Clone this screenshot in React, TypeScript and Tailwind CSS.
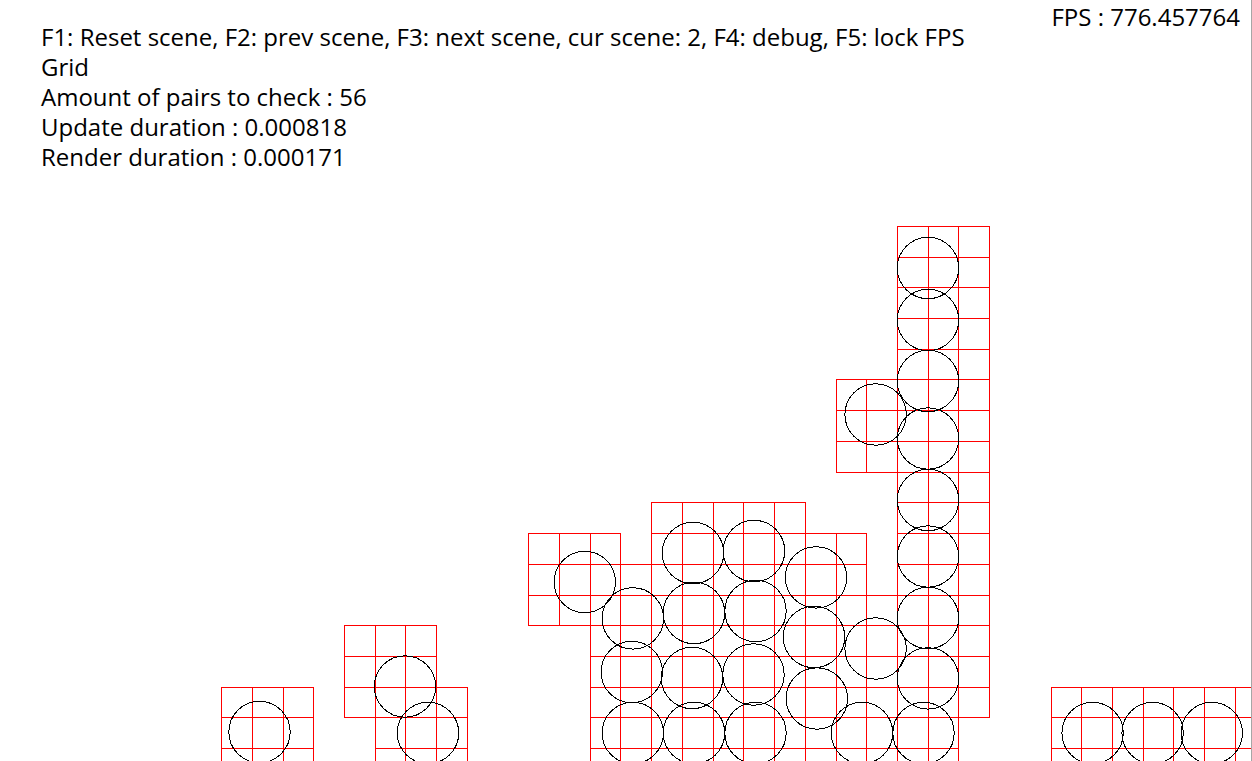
const COLS = [
  221, 252, 283, 313, 344, 375, 405, 436, 467, 497, 528, 559, 590, 620, 651, 682, 713, 743,
  774, 805, 836, 866, 897, 928, 958, 989, 1020, 1051, 1081, 1112, 1143, 1173, 1204, 1235, 1266,
];

const ROWS = [
  226, 257, 287, 318, 349, 379, 410, 441, 472, 502, 533, 564, 595, 625, 656, 687, 717, 748, 779,
];

// Occupied blocks of the grid: first column, first row, last column, last row.
const BLOCKS = [
  [0, 15, 3, 18],
  [4, 13, 7, 16],
  [5, 15, 8, 18],
  [10, 10, 13, 13],
  [12, 11, 21, 18],
  [14, 9, 19, 10],
  [14, 10, 21, 11],
  [21, 12, 24, 18],
  [20, 5, 22, 8],
  [22, 0, 25, 16],
  [27, 15, 34, 18],
];

const RADIUS = 30.7;

const BALLS = [
  [928, 268], [928, 320], [928, 381], [928, 438.5], [928, 500], [928, 556.5], [928, 618],
  [928, 678.4], [923.5, 733], [875.6, 414.5], [875.6, 648.5], [862, 733], [816, 577.4],
  [814, 637], [816.8, 698.5], [693, 553], [754, 551], [694, 613], [755.5, 611], [692, 678],
  [753.5, 674.5], [694, 733], [755.5, 733], [584.8, 582], [632.8, 618.4], [631.8, 672],
  [632.8, 733], [259.5, 732], [405, 686.5], [428, 733], [1092.6, 733], [1152.6, 733],
  [1211.8, 733],
];

function blockPath([c0, r0, c1, r1]: number[]) {
  const left = COLS[c0];
  const right = COLS[c1] + 1;
  const top = ROWS[r0];
  const bottom = ROWS[r1] + 1;
  const across = ROWS.slice(r0, r1 + 1).map((y) => `M${left} ${y + 0.5}H${right}`);
  const down = COLS.slice(c0, c1 + 1).map((x) => `M${x + 0.5} ${top}V${bottom}`);
  return across.concat(down).join("");
}

function Scene() {
  return (
    <svg
      className="absolute inset-0 h-full w-full"
      fill="none"
      shapeRendering="crispEdges"
      role="img"
      aria-label="Collision grid"
    >
      <path d={BLOCKS.map(blockPath).join("")} stroke="#ff0000" />
      {BALLS.map(([x, y]) => (
        <circle key={`${x}-${y}`} cx={x} cy={y} r={RADIUS} stroke="#000000" />
      ))}
    </svg>
  );
}

const STATS = [
  "F1: Reset scene, F2: prev scene, F3: next scene, cur scene: 2, F4: debug, F5: lock FPS",
  "Grid",
  "Amount of pairs to check : 56",
  "Update duration : 0.000818",
  "Render duration : 0.000171",
];

export default function App() {
  return (
    <main className="relative h-screen overflow-hidden border-r border-[#a6a6a6] bg-white font-['Open_Sans',sans-serif] text-2xl/[30px] text-black">
      <Scene />
      <div className="relative flex items-start justify-between pr-[11px] pl-[41px]">
        <div className="pt-[22px]">
          {STATS.map((line) => (
            <p key={line}>{line}</p>
          ))}
        </div>
        <p className="pt-[2px]">FPS : 776.457764</p>
      </div>
    </main>
  );
}
